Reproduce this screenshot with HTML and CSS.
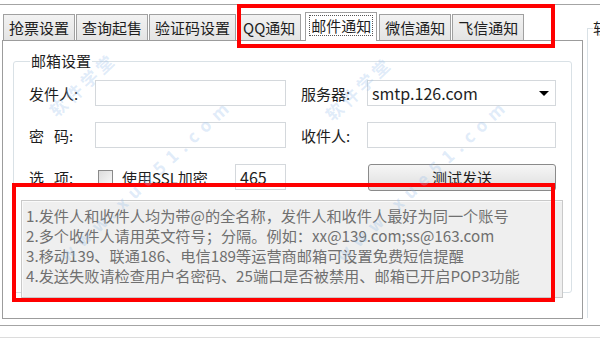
FILE: index.html
```html
<!DOCTYPE html>
<html lang="zh-CN">

<head>
    <meta charset="UTF-8">
    <title>邮件通知</title>
    <link rel="stylesheet" href="styles.css">
</head>

<body>
    <div class="window">
        <div class="main-row">
            <div class="main">
                <!-- 选项卡 -->
                <div class="tabs">
                    <span class="tab">抢票设置</span>
                    <span class="tab">查询起售</span>
                    <span class="tab">验证码设置</span>
                    <span class="tab">QQ通知</span>
                    <span class="tab active"><span class="focus">邮件通知</span></span>
                    <span class="tab">微信通知</span>
                    <span class="tab">飞信通知</span>
                </div>

                <div class="panel">
                    <fieldset class="group">
                        <legend>邮箱设置</legend>
                        <div class="form">
                            <span class="label">发件人:</span>
                            <span class="input"></span>
                            <span class="label">服务器:</span>
                            <span class="input select">smtp.126.com<span class="arrow"></span></span>

                            <span class="label">密&nbsp;&nbsp;&nbsp;码:</span>
                            <span class="input"></span>
                            <span class="label">收件人:</span>
                            <span class="input"></span>

                            <span class="label">选&nbsp;&nbsp;&nbsp;项:</span>
                            <span class="options">
                                <span class="checkbox"></span>
                                <span class="check-text">使用SSL加密</span>
                                <span class="input port">465</span>
                            </span>
                            <span></span>
                            <span class="button">测试发送</span>
                        </div>
                        <div class="tips">
                            <p>1.发件人和收件人均为带@的全名称，发件人和收件人最好为同一个账号</p>
                            <p>2.多个收件人请用英文符号；分隔。例如：xx@139.com;ss@163.com</p>
                            <p>3.移动139、联通186、电信189等运营商邮箱可设置免费短信提醒</p>
                            <p>4.发送失败请检查用户名密码、25端口是否被禁用、邮箱已开启POP3功能</p>
                        </div>
                    </fieldset>
                </div>
            </div>
            <div class="side">
                <div class="side-group">
                    <span class="side-title">软</span>
                </div>
            </div>
        </div>
        <div class="status"></div>
    </div>

    <!-- 标注框 -->
    <div class="mark mark-tabs"></div>
    <div class="mark mark-tips"></div>

    <!-- 水印 -->
    <div class="watermark wm-1">软件学堂</div>
    <div class="watermark wm-2">www.xue51.com</div>
    <div class="watermark wm-3">软件学堂</div>
    <div class="watermark wm-4">www.xue51.com</div>
</body>

</html>
```

FILE: styles.css
```css
body {
    margin: 0;
    padding: 0;
    width: 600px;
    height: 341px;
    overflow: hidden;
    background: #fff;
    color: #1e1e1e;
    font-family: "Noto Sans CJK SC", sans-serif;
    font-size: 15px;
    position: relative;
}

.window {
    margin-top: 4px;
    border-top: 1px solid #a4a4a4;
}

.main-row {
    display: flex;
}

.main {
    width: 581px;
    margin-left: 2px;
}

/* Tabs */
.tabs {
    display: flex;
    align-items: flex-end;
    height: 35px;
    padding-left: 1px;
}

.tab {
    height: 25px;
    line-height: 25px;
    padding: 0 5px;
    margin-right: 1px;
    background: linear-gradient(#f2f2f2, #e4e4e4);
    border: 1px solid #a0a0a0;
    border-bottom: none;
    white-space: nowrap;
}

.tab.active {
    height: 28px;
    margin: 0 2px 0 3px;
    background: #fff;
    position: relative;
    top: 1px;
    padding: 0 3px;
}

.tab .focus {
    border: 1px dotted #555;
    padding: 0 1px;
    line-height: 19px;
    display: inline-block;
}

.panel {
    border: 1px solid #9c9c9c;
    padding: 12px 10px 0 10px;
    box-sizing: border-box;
    height: 279px;
}

/* Group box */
.group {
    margin: 0;
    padding: 11px 8px 5px 7px;
    border: 1px solid #d9e1e6;
    border-radius: 3px;
    height: 240px;
    box-sizing: border-box;
}

.group legend {
    padding: 0 1px;
    margin-left: 9px;
    line-height: 16px;
}

.form {
    display: grid;
    grid-template-columns: 66px 191px 15px 66px 189px;
    grid-template-rows: 26px 26px 26px;
    row-gap: 16px;
    margin-left: 8px;
    align-items: center;
}

.form .label:nth-child(3),
.form .label:nth-child(7) {
    grid-column: 4;
}

.input {
    height: 26px;
    box-sizing: border-box;
    border: 1px solid #d4d8dc;
    background: #fff;
    display: flex;
    align-items: center;
    padding-left: 4px;
    font-size: 16px;
}

.select {
    justify-content: space-between;
    padding-right: 6px;
}

.arrow {
    width: 0;
    height: 0;
    border-left: 5px solid transparent;
    border-right: 5px solid transparent;
    border-top: 5px solid #000;
}

.options {
    grid-column: 2 / 3;
    display: flex;
    align-items: center;
    width: 191px;
}

.checkbox {
    width: 13px;
    height: 13px;
    border: 1px solid #8a8a8a;
    background: linear-gradient(135deg, #dcdcdc, #f8f8f8);
    margin: 0 9px 0 3px;
}

.check-text {
    width: 113px;
}

.port {
    width: 51px;
    margin-top: -1px;
}

.button {
    grid-column: 5;
    height: 27px;
    box-sizing: border-box;
    border: 1px solid #8a8a8a;
    border-radius: 3px;
    background: linear-gradient(#f6f6f6, #dedede);
    text-align: center;
    line-height: 25px;
    margin-left: 1px;
}

.tips {
    margin-top: 10px;
    height: 98px;
    box-sizing: border-box;
    border: 1px solid #c9c9c9;
    background: #efefef;
    color: #707070;
    padding: 4px 4px 0 4px;
    font-size: 15.2px;
    box-shadow: inset 1px 1px 0 #fafafa;
}

.tips p {
    margin: 0;
    line-height: 20px;
    white-space: nowrap;
}

/* Right side */
.side {
    flex: 1;
    padding: 23px 0 0 4px;
    overflow: hidden;
}

.side-group {
    height: 290px;
    box-sizing: border-box;
    border: 1px solid #d9e1e6;
    border-right: none;
    border-bottom: none;
    position: relative;
}

.side-title {
    position: absolute;
    top: -9px;
    left: 5px;
    background: #fff;
    line-height: 16px;
}

.status {
    margin-top: 6px;
    height: 11px;
    border-top: 1px solid #a4a4a4;
    border-bottom: 1px solid #dcdcdc;
}

/* Red marks */
.mark {
    position: absolute;
    border: 4px solid #ff0000;
    box-sizing: border-box;
}

.mark-tabs {
    left: 237px;
    top: 4px;
    width: 318px;
    height: 44px;
}

.mark-tips {
    left: 12px;
    top: 183px;
    width: 543px;
    height: 119px;
}

/* Watermark */
.watermark {
    position: absolute;
    color: rgba(150, 190, 235, 0.3);
    transform-origin: left center;
    transform: rotate(-43deg);
    white-space: nowrap;
    font-weight: bold;
    line-height: 20px;
    pointer-events: none;
}

.wm-1,
.wm-3 {
    font-size: 17px;
    letter-spacing: 4px;
}

.wm-2,
.wm-4 {
    font-size: 17px;
    letter-spacing: 7px;
}

.wm-1 {
    left: 52px;
    top: 103px;
}

.wm-2 {
    left: 62px;
    top: 248px;
}

.wm-3 {
    left: 328px;
    top: 107px;
}

.wm-4 {
    left: 338px;
    top: 248px;
}
```
